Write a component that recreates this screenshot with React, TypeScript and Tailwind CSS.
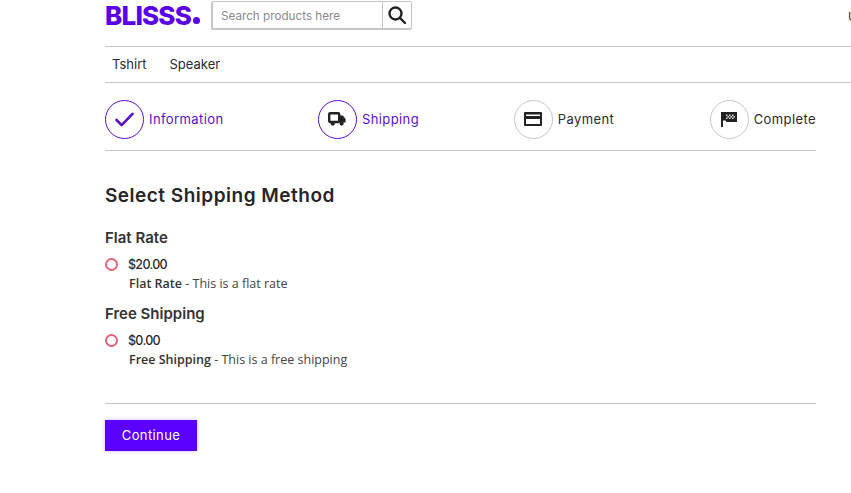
import React from "react";

const sans = "font-['Inter','Liberation_Sans',sans-serif]";

function Check() {
  return (
    <svg width="19" height="15" viewBox="0 0 20 16" fill="none" stroke="#5a0fd0" strokeWidth="2.8" strokeLinecap="round" strokeLinejoin="round">
      <path d="M1.5 8.5 L7 14 L18.5 2" />
    </svg>
  );
}
function Truck() {
  return (
    <svg width="18" height="14" viewBox="0 0 18 14" fill="none">
      <rect x="1.2" y="1.2" width="10" height="8.8" rx="1" stroke="#222" strokeWidth="2.4" />
      <path d="M12 3.5h2.8L17.6 7v3.6H12z" fill="#222" />
      <circle cx="4.8" cy="11.6" r="2.1" fill="#222" />
      <circle cx="13.6" cy="11.6" r="2.1" fill="#222" />
    </svg>
  );
}
function Card() {
  return (
    <svg width="18" height="14" viewBox="0 0 18 14" fill="none">
      <rect x="0" y="0" width="18" height="14" rx="1" fill="#222" />
      <rect x="2" y="2.5" width="14" height="1.5" fill="#fff" />
      <rect x="2" y="7" width="14" height="5" fill="#fff" />
    </svg>
  );
}
function Flag() {
  return (
    <svg width="16" height="16" viewBox="0 0 16 16">
      <rect x="0" y="1" width="2" height="15" fill="#222" />
      <path d="M2 1h14v10H5.5L4.5 9.5H2z" fill="#222" />
      <path d="M5 3.5h1.5V5H5zM8 3.5h1.5V5H8zM11 3.5h1.5V5H11zM6.5 5H8v1.5H6.5zM9.5 5H11v1.5H9.5zM12.5 5H14v1.5h-1.5zM5 6.5h1.5V8H5zM8 6.5h1.5V8H8zM11 6.5h1.5V8H11z" fill="#ddd" />
    </svg>
  );
}

function Step({ label, active, icon, className }: { label: string; active?: boolean; icon: React.ReactNode; className: string }) {
  return (
    <div className={`flex items-center gap-[5px] ${className}`}>
      <div className={`flex h-[39px] w-[39px] items-center justify-center rounded-full border ${active ? "border-[#5a0fd0]" : "border-[#c8c8c8]"}`}>
        {icon}
      </div>
      <span className={`pt-[1px] text-[13px] tracking-[0.4px] ${active ? "text-[#5a0fd0]" : "text-[#2b2b2b]"}`}>{label}</span>
    </div>
  );
}

function Method({ title, price, name, desc }: { title: string; price: string; name: string; desc: string }) {
  return (
    <div>
      <h3 className="h-[24px] text-[15px] leading-[24px] font-semibold text-[#333]">{title}</h3>
      <div className="mt-[3px] flex h-[24px] items-center">
        <span className="mt-[-2px] h-[13px] w-[13px] rounded-full border-[2.5px] border-[#e8607a]" />
        <span className="ml-[10px] text-[12.5px] font-medium tracking-[-0.7px] text-[#2b2b2b]">{price}</span>
      </div>
      <p className="mt-[-3px] ml-[24px] h-[19px] text-[12.5px] leading-[19px] text-[#444] font-['Open_Sans','Liberation_Sans',sans-serif]">
        <span className="font-semibold text-[#333]">{name}</span> - {desc}
      </p>
    </div>
  );
}

export default function App() {
  return (
    <div className={`h-[493px] w-[851px] overflow-hidden bg-white ${sans}`}>
      <header className="relative ml-[105px] h-[47px] border-b border-[#c4c4c4]">
        <div className="flex items-start">
          <div className="mt-[2px] flex h-[28px] w-[106px] items-center text-[26px] leading-none font-extrabold tracking-[-0.8px] text-[#5a00e6]">
            BLISSS<span className="ml-[2px] mt-[8px] h-[7px] w-[7px] rounded-full bg-[#5a00e6]" />
          </div>
          <div className="mt-[1px] flex h-[29px] w-[201px] rounded-[2px] border-2 border-[#c6c6c6] border-r-1 border-t-1">
            <div className="flex flex-1 items-center pl-[8px] pt-[3px] text-[11.7px] text-[#8a8a8a]">Search products here</div>
            <div className="flex w-[29px] items-center justify-center border-l border-[#c6c6c6]">
              <svg width="20" height="20" viewBox="0 0 20 20" fill="none" stroke="#222" strokeWidth="2.4" strokeLinecap="round">
                <circle cx="8.5" cy="8.5" r="6" />
                <path d="M13 13 L18 18" />
              </svg>
            </div>
          </div>
        </div>
        <span className="absolute left-[743px] top-[8px] text-[12px] text-[#333]">U</span>
      </header>

      <nav className="ml-[105px] flex h-[36px] items-center gap-[23px] border-b border-[#c4c4c4] pl-[7px] text-[13px] text-[#2b2b2b]">
        <span>Tshirt</span>
        <span>Speaker</span>
      </nav>

      <main className="ml-[105px] w-[711px]">
        <div className="flex h-[68px] items-center border-b border-[#c4c4c4] pt-[5px]">
          <Step className="w-[213px]" label="Information" active icon={<Check />} />
          <Step className="w-[196px]" label="Shipping" active icon={<Truck />} />
          <Step className="w-[196px]" label="Payment" icon={<Card />} />
          <Step className="flex-1" label="Complete" icon={<Flag />} />
        </div>

        <h2 className="mt-[31px] h-[28px] text-[19px] leading-[28px] font-semibold tracking-[0.5px] text-[#262626]">Select Shipping Method</h2>

        <div className="mt-[16px] flex flex-col gap-[9px]">
          <Method title="Flat Rate" price="$20.00" name="Flat Rate" desc="This is a flat rate" />
          <Method title="Free Shipping" price="$0.00" name="Free Shipping" desc="This is a free shipping" />
        </div>

        <div className="mt-[34px] border-t border-[#c4c4c4] pt-[16px]">
          <button className="h-[31px] w-[92px] bg-[#5a00ff] text-[13px] tracking-[0.4px] text-white shadow-[0_0_4px_rgba(90,0,255,0.3)]">Continue</button>
        </div>
      </main>
    </div>
  );
}
